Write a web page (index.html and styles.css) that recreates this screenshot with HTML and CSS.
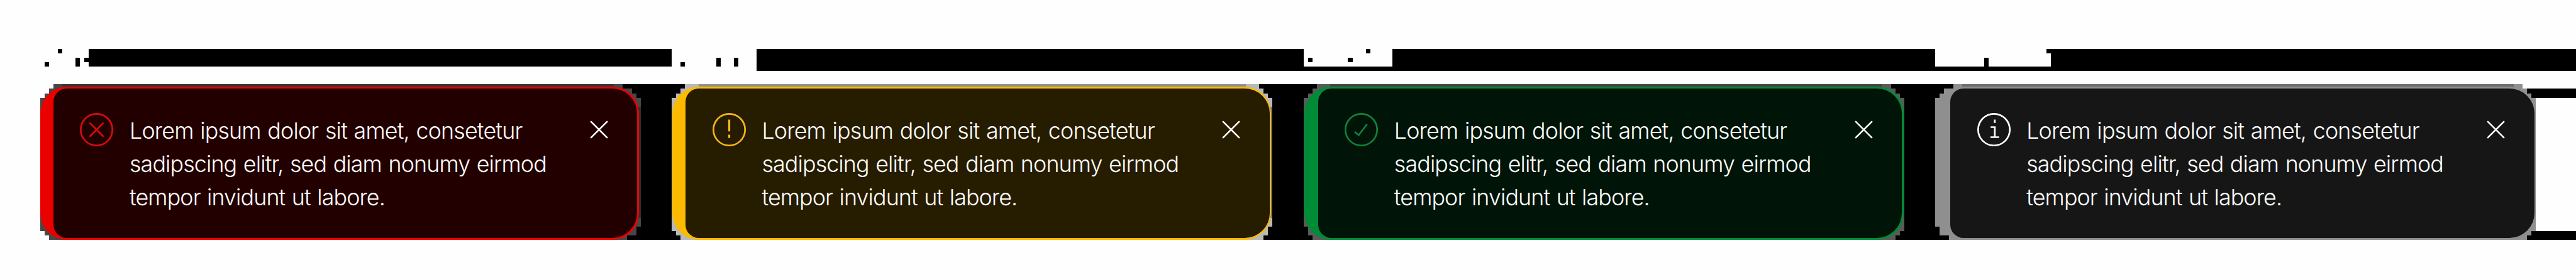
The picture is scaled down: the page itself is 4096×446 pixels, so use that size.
FILE: index.html
```html
<!DOCTYPE html>
<html lang="en">
<head>
<meta charset="utf-8">
<title>Notifications</title>
<link rel="stylesheet" href="styles.css">
</head>
<body>
<svg class="backdrop" viewBox="0 0 4632 504" preserveAspectRatio="none" shape-rendering="crispEdges" aria-hidden="true">
  <!-- dark band above the cards -->
  <path d="M104 88h8v8h-8zM80 112h8v8h-8zM136 104h8v16h-8zM152 104h8v8h-8zM160 88H1208V120H160z
    M1224 112h8v8h-8zM1288 104h8v16h-8zM1320 104h8v16h-8z
    M1360 88H2344V120H2504V88H3480V120H3568V104H3576V120H3688V96H3680V88H4632V128H1360z
    M2352 104h8v8h-8zM2424 104h8v8h-8zM2456 88h8v8h-8z"/>
  <!-- gaps between the cards -->
  <path d="M1100 152H1260V432H1100zM2240 152H2390V432H2240zM3380 152H3530V432H3380zM4530 160H4632V176H4530zM4530 416H4632V432H4530z"/>
  <!-- stepped silhouettes under each card -->
  <path fill="#474747" d="M96 152H1120V160H1136V168H1144V176H1152V408H1144V424H1128V432H88V424H80V416H72V176H80V168H88V160H96z"/>
  <path fill="#b9b9b9" d="M1232 152H2264V160H2272V168H2280V176H2288V408H2280V424H2272V432H1224V424H1216V416H1208V176H1216V168H1224V160H1232z"/>
  <path fill="#5a5a5a" d="M2368 152H3400V160H3408V168H3416V176H3424V416H3416V424H3408V432H2360V424H2352V408H2344V176H2352V168H2360V160H2368z"/>
  <path fill="#8f8f8f" d="M3512 152H4536V160H4544V168H4552V176H4560V416H4552V424H4544V432H3504V424H3488V408H3480V176H3488V168H3496V160H3512z"/>
  <path fill="#353735" d="M112 152H1104V160H112z"/>
  <path fill="#909090" d="M1256 152H2240V160H1256z"/>
  <path fill="#444" d="M2392 152H3384V160H2392z"/>
  <path fill="#6e6e6e" d="M3528 152H4520V160H3528z"/>
  <path fill="#303030" d="M1146 192H1152V392H1146z"/>
  <path fill="#777" d="M2282 192H2288V392H2282z"/>
</svg>
<main class="notifications">
  <article class="card error">
    <div class="body">
      <svg class="icon" viewBox="0 0 60 60"><circle cx="30" cy="30" r="28.5"/><path stroke-linecap="round" d="M18.5 18.5l23 23M41.5 18.5l-23 23"/></svg>
      <p class="text"><span class="line first">Lorem ipsum dolor sit amet, consetetur</span><span class="line second">sadipscing elitr, sed diam nonumy eirmod</span><span class="line third">tempor invidunt ut labore.</span></p>
      <svg class="close" viewBox="0 0 60 60"><path d="M15.7 15.7l28.6 28.6M44.3 15.7L15.7 44.3"/></svg>
    </div>
  </article>
  <article class="card warning">
    <div class="body">
      <svg class="icon" viewBox="0 0 60 60"><circle cx="30" cy="30" r="28.5"/><path d="M30 12v21M30 39v6" stroke-width="3.6"/></svg>
      <p class="text"><span class="line first">Lorem ipsum dolor sit amet, consetetur</span><span class="line second">sadipscing elitr, sed diam nonumy eirmod</span><span class="line third">tempor invidunt ut labore.</span></p>
      <svg class="close" viewBox="0 0 60 60"><path d="M15.7 15.7l28.6 28.6M44.3 15.7L15.7 44.3"/></svg>
    </div>
  </article>
  <article class="card success">
    <div class="body">
      <svg class="icon" viewBox="0 0 60 60"><circle cx="30" cy="30" r="28.5"/><path d="M18 33.8l7.4 6L40.3 20"/></svg>
      <p class="text"><span class="line first">Lorem ipsum dolor sit amet, consetetur</span><span class="line second">sadipscing elitr, sed diam nonumy eirmod</span><span class="line third">tempor invidunt ut labore.</span></p>
      <svg class="close" viewBox="0 0 60 60"><path d="M15.7 15.7l28.6 28.6M44.3 15.7L15.7 44.3"/></svg>
    </div>
  </article>
  <article class="card info">
    <div class="body">
      <svg class="icon" viewBox="0 0 60 60"><circle cx="30" cy="30" r="28.5"/><path d="M31.5 12v6M24 25.5h7.5M31.5 24v21M23.7 43.5h15.6"/></svg>
      <p class="text"><span class="line first">Lorem ipsum dolor sit amet, consetetur</span><span class="line second">sadipscing elitr, sed diam nonumy eirmod</span><span class="line third">tempor invidunt ut labore.</span></p>
      <svg class="close" viewBox="0 0 60 60"><path d="M15.7 15.7l28.6 28.6M44.3 15.7L15.7 44.3"/></svg>
    </div>
  </article>
</main>
</body>
</html>
```
FILE: styles.css
```css
/* 0.1rem is one design pixel */
html {
  font-size: 8.8428px;
}

body {
  margin: 0;
  background: #fefefe;
  overflow: hidden;
  font-family: Inter, "Liberation Sans", sans-serif;
}

.backdrop {
  position: absolute;
  left: 0;
  top: 0;
  width: 463.2rem;
  height: 50.4rem;
}

.notifications {
  position: relative;
  box-sizing: border-box;
  display: flex;
  gap: 6rem;
  height: 50.4rem;
  padding: 15.6rem 7.2rem 7.2rem;
}

.card {
  flex: none;
  box-sizing: border-box;
  width: 107.7rem;
  height: 27.6rem;
  padding: 0.3rem 0.3rem 0.3rem 2.4rem;
  border-radius: 4.8rem;
  background: var(--accent);
}

.body {
  box-sizing: border-box;
  display: flex;
  align-items: flex-start;
  height: 100%;
  padding: 4.5rem 3.9rem 0 4.8rem;
  border-radius: 2.4rem 4.5rem 4.5rem 2.4rem;
  background: var(--surface);
}

.error {
  --accent: #eb0000;
  --surface: #230000;
  --icon: #d90d0d;
}

.warning {
  --accent: #fcbb00;
  --surface: #261c00;
  --icon: #f4b71a;
}

.success {
  --accent: #008c36;
  --surface: #001408;
  --icon: #10833b;
}

.info {
  --accent: #8f8f8f;
  --surface: #161616;
  --icon: #fff;
}

.icon,
.close {
  flex: none;
  width: 6rem;
  height: 6rem;
  fill: none;
  stroke-width: 3;
}

.icon {
  stroke: var(--icon);
}

.close {
  margin-left: auto;
  stroke: #fff;
  stroke-linecap: round;
}

.text {
  margin: 0.17rem 0 0 2.9rem;
  color: #fff;
  font-size: 4.05rem;
  font-weight: 300;
  line-height: 6rem;
  white-space: nowrap;
  word-spacing: 0.15rem;
}

.line {
  display: block;
}

.first {
  letter-spacing: -0.093rem;
}

.second {
  letter-spacing: -0.099rem;
}

.third {
  letter-spacing: -0.102rem;
}
```
